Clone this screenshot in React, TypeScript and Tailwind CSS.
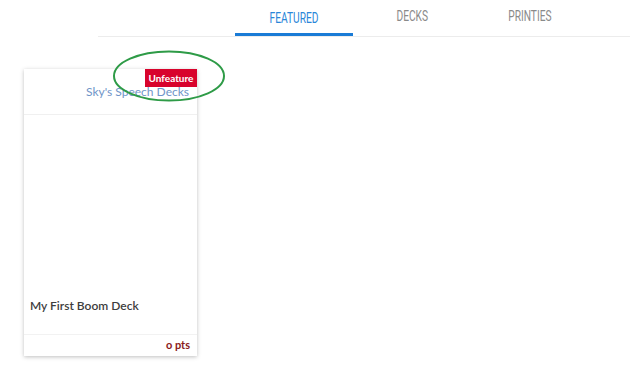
const tabs = [
  { label: "FEATURED", active: true },
  { label: "DECKS", active: false },
  { label: "PRINTIES", active: false },
];

export default function App() {
  return (
    <div className="relative h-[372px] w-[630px] overflow-hidden bg-white font-['Lato','Noto_Sans',sans-serif]">
      <div className="ml-[98px] flex h-[37px] border-b border-[#ececec] pl-[137px]">
        {tabs.map((tab) => (
          <div
            key={tab.label}
            className={
              tab.active
                ? "flex w-[118px] items-center justify-center border-b-[3px] border-[#1a7bd6] pt-[3px] font-['Roboto',sans-serif] text-[15px] text-[#2a86d8]"
                : "flex w-[118px] items-center justify-center pb-[3px] font-['Roboto',sans-serif] text-[15px] text-[#8a8a8a]"
            }
          >
            <span className="inline-block scale-x-[0.68]">{tab.label}</span>
          </div>
        ))}
      </div>

      <div className="ml-[24px] mt-[32px] flex h-[287px] w-[173px] flex-col bg-white shadow-[0_1px_4px_rgba(0,0,0,0.25)]">
        <div className="relative h-[46px] border-b border-[#f0f0f0]">
          <div className="absolute right-0 top-0 flex h-[18px] w-[52px] items-center justify-center bg-[#d8032c] text-[10px] font-bold text-white">
            Unfeature
          </div>
          <div className="absolute right-[8px] top-[14px] text-[12px] text-[#6f94c8]">
            Sky's Speech Decks
          </div>
        </div>
        <div className="flex flex-1 items-end px-[6px] pb-[19px]">
          <div className="text-[12px] font-semibold text-[#3d3d3d]">My First Boom Deck</div>
        </div>
        <div className="flex h-[22px] items-center justify-end border-t border-[#f2f2f2] pr-[7px] text-[11px] font-bold text-[#8b1a1a]">
          o pts
        </div>
      </div>

      <svg
        className="absolute left-[112px] top-[50px]"
        width="114"
        height="54"
        viewBox="0 0 114 54"
        fill="none"
      >
        <ellipse cx="57" cy="26" rx="55" ry="24.5" stroke="#2e9b47" strokeWidth="2" />
      </svg>
    </div>
  );
}
